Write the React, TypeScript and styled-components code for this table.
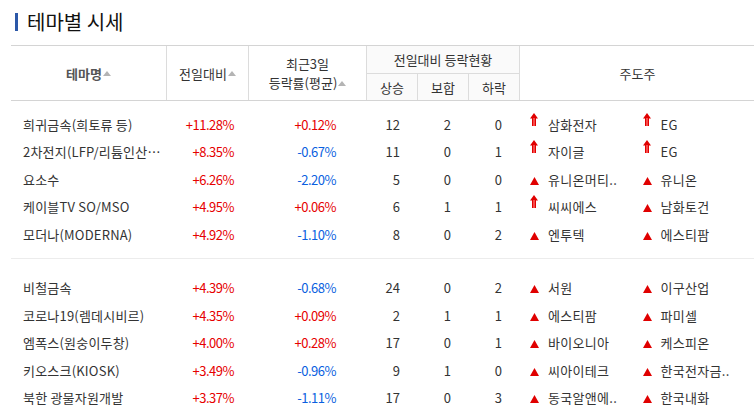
import { createGlobalStyle, styled } from 'styled-components';

type Theme = {
  name: string;
  change: string;
  avg3: string;
  up: number;
  flat: number;
  down: number;
  leaders: { name: string; limit?: boolean }[];
};

const groups: Theme[][] = [
  [
    { name: '희귀금속(희토류 등)', change: '+11.28%', avg3: '+0.12%', up: 12, flat: 2, down: 0, leaders: [{ name: '삼화전자', limit: true }, { name: 'EG', limit: true }] },
    { name: '2차전지(LFP/리튬인산…', change: '+8.35%', avg3: '-0.67%', up: 11, flat: 0, down: 1, leaders: [{ name: '자이글', limit: true }, { name: 'EG', limit: true }] },
    { name: '요소수', change: '+6.26%', avg3: '-2.20%', up: 5, flat: 0, down: 0, leaders: [{ name: '유니온머티..' }, { name: '유니온' }] },
    { name: '케이블TV SO/MSO', change: '+4.95%', avg3: '+0.06%', up: 6, flat: 1, down: 1, leaders: [{ name: '씨씨에스', limit: true }, { name: '남화토건' }] },
    { name: '모더나(MODERNA)', change: '+4.92%', avg3: '-1.10%', up: 8, flat: 0, down: 2, leaders: [{ name: '엔투텍' }, { name: '에스티팜' }] },
  ],
  [
    { name: '비철금속', change: '+4.39%', avg3: '-0.68%', up: 24, flat: 0, down: 2, leaders: [{ name: '서원' }, { name: '이구산업' }] },
    { name: '코로나19(렘데시비르)', change: '+4.35%', avg3: '+0.09%', up: 2, flat: 1, down: 1, leaders: [{ name: '에스티팜' }, { name: '파미셀' }] },
    { name: '엠폭스(원숭이두창)', change: '+4.00%', avg3: '+0.28%', up: 17, flat: 0, down: 1, leaders: [{ name: '바이오니아' }, { name: '케스피온' }] },
    { name: '키오스크(KIOSK)', change: '+3.49%', avg3: '-0.96%', up: 9, flat: 1, down: 0, leaders: [{ name: '씨아이테크' }, { name: '한국전자금..' }] },
    { name: '북한 광물자원개발', change: '+3.37%', avg3: '-1.11%', up: 17, flat: 0, down: 3, leaders: [{ name: '동국알앤에..' }, { name: '한국내화' }] },
  ],
];

const GlobalStyle = createGlobalStyle`
  body {
    margin: 0;
    background: #fff;
    font-family: "Noto Sans CJK KR", "Noto Sans", sans-serif;
    color: #333;
  }
`;

const COLS = '155px 82px 118px 51px 51px 51px 236px';

const SortMark = () => (
  <SortIcon width="8" height="5" viewBox="0 0 8 5">
    <path d="M4 0 L8 5 L0 5 Z" fill="#b4b4b4" />
  </SortIcon>
);

const LimitArrow = () => (
  <svg width="8" height="13" viewBox="0 0 8 13">
    <path d="M4 0 L8 5.5 L6 5.5 L6 13 L2 13 L2 5.5 L0 5.5 Z" fill="#e00000" />
    <rect x="3.3" y="5" width="1.4" height="8" fill="#ff6a6a" />
  </svg>
);

const RiseArrow = () => (
  <svg width="9" height="8" viewBox="0 0 9 8">
    <path d="M4.5 0 L9 8 L0 8 Z" fill="#e00000" />
  </svg>
);

const App = () => {
  return (
    <Page>
      <GlobalStyle />
      <Title>테마별 시세</Title>
      <Table>
        <Head>
          <HeadCell $rows="1 / 3" $bold>
            테마명
            <SortMark />
          </HeadCell>
          <HeadCell $rows="1 / 3" $line>
            전일대비
            <SortMark />
          </HeadCell>
          <HeadCell $rows="1 / 3" $line>
            <span>
              최근3일
              <br />
              등락률(평균)
              <SortMark />
            </span>
          </HeadCell>
          <HeadCell $cols="4 / 7" $line $shade>
            전일대비 등락현황
          </HeadCell>
          <HeadCell $rows="1 / 3" $cols="7 / 8" $line>
            주도주
          </HeadCell>
          <HeadCell $cols="4 / 5" $line $shade $top>
            상승
          </HeadCell>
          <HeadCell $cols="5 / 6" $line $shade $top>
            보합
          </HeadCell>
          <HeadCell $cols="6 / 7" $line $shade $top>
            하락
          </HeadCell>
        </Head>
        {groups.map((rows, gi) => (
          <Group key={gi} $first={gi === 0}>
            {rows.map((r) => (
              <Row key={r.name}>
                <Name>{r.name}</Name>
                <Rate $up={r.change.startsWith('+')} $pad={14}>
                  {r.change}
                </Rate>
                <Rate $up={r.avg3.startsWith('+')} $pad={30}>
                  {r.avg3}
                </Rate>
                <Count>{r.up}</Count>
                <Count>{r.flat}</Count>
                <Count>{r.down}</Count>
                <Leaders>
                  {r.leaders.map((l, li) => (
                    <Leader key={li}>
                      <Mark $limit={!!l.limit}>{l.limit ? <LimitArrow /> : <RiseArrow />}</Mark>
                      {l.name}
                    </Leader>
                  ))}
                </Leaders>
              </Row>
            ))}
          </Group>
        ))}
      </Table>
    </Page>
  );
};

export default App;

const Page = styled.div`
  width: 754px;
  height: 416px;
  overflow: hidden;
  padding: 10px 0 0 11px;
  box-sizing: border-box;
`;

const Title = styled.h2`
  margin: 0 0 0 4px;
  height: 24px;
  display: flex;
  align-items: center;
  gap: 9px;
  font-size: 20px;
  font-weight: 400;
  line-height: 24px;
  color: #111;

  &::before {
    content: '';
    width: 3px;
    height: 18px;
    background: #2c58a8;
  }
`;

const Table = styled.div`
  width: 744px;
  margin-top: 11px;
`;

const Head = styled.div`
  display: grid;
  grid-template-columns: ${COLS};
  grid-template-rows: 27px 27px;
  border-top: 1px solid #d4d4d4;
  border-bottom: 1px solid #d4d4d4;
`;

const HeadCell = styled.div<{
  $rows?: string;
  $cols?: string;
  $bold?: boolean;
  $line?: boolean;
  $shade?: boolean;
  $top?: boolean;
}>`
  grid-row: ${(p) => p.$rows ?? 'auto'};
  grid-column: ${(p) => p.$cols ?? 'auto'};
  display: flex;
  align-items: center;
  justify-content: center;
  text-align: center;
  font-size: 13px;
  line-height: 19px;
  font-weight: ${(p) => (p.$bold ? 700 : 400)};
  color: ${(p) => (p.$bold ? '#555' : '#333')};
  background: ${(p) => (p.$shade ? '#fafafa' : '#fff')};
  border-left: ${(p) => (p.$line ? '1px solid #dcdcdc' : 'none')};
  border-top: ${(p) => (p.$top ? '1px solid #dcdcdc' : 'none')};
  box-sizing: border-box;
`;

const SortIcon = styled.svg`
  margin-left: 1px;
  vertical-align: 2px;
`;

const Group = styled.div<{ $first: boolean }>`
  padding: ${(p) => (p.$first ? '10px 0 9.5px' : '15.5px 0 0')};
  border-bottom: ${(p) => (p.$first ? '1px solid #ececec' : 'none')};
`;

const Row = styled.div`
  display: grid;
  grid-template-columns: ${COLS};
  height: 27.5px;
  align-items: center;
  font-size: 13px;
  line-height: 18px;
  white-space: nowrap;
`;

const Name = styled.div`
  padding-left: 12px;
  color: #333;
  letter-spacing: 0.2px;
`;

const Rate = styled.div<{ $up: boolean; $pad: number }>`
  text-align: right;
  padding-right: ${(p) => p.$pad}px;
  color: ${(p) => (p.$up ? '#e60000' : '#0a5fe0')};
  letter-spacing: -0.5px;
`;

const Count = styled.div`
  text-align: right;
  padding-right: 17px;
  color: #333;
`;

const Leaders = styled.div`
  display: flex;
  padding-left: 11px;
`;

const Leader = styled.div`
  width: 113px;
  display: flex;
  align-items: center;
  color: #333;
  letter-spacing: 0.3px;
`;

const Mark = styled.span<{ $limit: boolean }>`
  width: 18px;
  display: flex;
  align-self: ${(p) => (p.$limit ? 'flex-start' : 'center')};
  margin-top: ${(p) => (p.$limit ? '-3px' : '2px')};
`;
